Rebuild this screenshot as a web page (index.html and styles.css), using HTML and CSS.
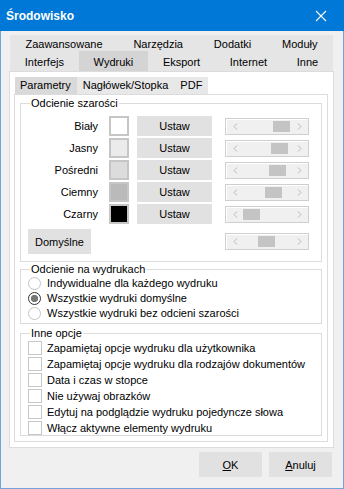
FILE: index.html
```html
<!DOCTYPE html>
<html lang="pl">
<head>
    <meta charset="UTF-8">
    <title>Środowisko</title>
    <link rel="stylesheet" href="styles.css">
</head>
<body>
<div class="window">
    <div class="titlebar">
        <span class="title">Środowisko</span>
        <span class="close">
            <svg width="12" height="12" viewBox="0 0 12 12"><path d="M1 1 L11 11 M11 1 L1 11" stroke="#fff" stroke-width="1.1" fill="none"/></svg>
        </span>
    </div>

    <div class="client">
        <div class="tabstrip">
            <div class="tabrow">
                <div class="tab">Zaawansowane</div>
                <div class="tab">Narzędzia</div>
                <div class="tab">Dodatki</div>
                <div class="tab">Moduły</div>
            </div>
            <div class="tabrow">
                <div class="tab">Interfejs</div>
                <div class="tab active">Wydruki</div>
                <div class="tab">Eksport</div>
                <div class="tab">Internet</div>
                <div class="tab">Inne</div>
            </div>
        </div>

        <div class="panel">
            <div class="subtabs">
                <div class="subtab active">Parametry</div>
                <div class="subtab">Nagłówek/Stopka</div>
                <div class="subtab">PDF</div>
            </div>

            <div class="subpanel">
                <fieldset class="group shades">
                    <legend>Odcienie szarości</legend>

                    <div class="shade-row">
                        <span class="shade-label">Biały</span>
                        <span class="swatch white"></span>
                        <button class="btn set">Ustaw</button>
                        <div class="slider">
                            <svg class="arr" width="5" height="7" viewBox="0 0 5 7"><path d="M4 0.5 L1 3.5 L4 6.5" stroke="#b9b9b9" fill="none"/></svg>
                            <span class="track"><span class="thumb" style="margin-left:33px"></span></span>
                            <svg class="arr" width="5" height="7" viewBox="0 0 5 7"><path d="M1 0.5 L4 3.5 L1 6.5" stroke="#b9b9b9" fill="none"/></svg>
                        </div>
                    </div>
                    <div class="shade-row">
                        <span class="shade-label">Jasny</span>
                        <span class="swatch light"></span>
                        <button class="btn set">Ustaw</button>
                        <div class="slider">
                            <svg class="arr" width="5" height="7" viewBox="0 0 5 7"><path d="M4 0.5 L1 3.5 L4 6.5" stroke="#b9b9b9" fill="none"/></svg>
                            <span class="track"><span class="thumb" style="margin-left:31px"></span></span>
                            <svg class="arr" width="5" height="7" viewBox="0 0 5 7"><path d="M1 0.5 L4 3.5 L1 6.5" stroke="#b9b9b9" fill="none"/></svg>
                        </div>
                    </div>
                    <div class="shade-row">
                        <span class="shade-label">Pośredni</span>
                        <span class="swatch medium"></span>
                        <button class="btn set">Ustaw</button>
                        <div class="slider">
                            <svg class="arr" width="5" height="7" viewBox="0 0 5 7"><path d="M4 0.5 L1 3.5 L4 6.5" stroke="#b9b9b9" fill="none"/></svg>
                            <span class="track"><span class="thumb" style="margin-left:29px"></span></span>
                            <svg class="arr" width="5" height="7" viewBox="0 0 5 7"><path d="M1 0.5 L4 3.5 L1 6.5" stroke="#b9b9b9" fill="none"/></svg>
                        </div>
                    </div>
                    <div class="shade-row">
                        <span class="shade-label">Ciemny</span>
                        <span class="swatch dark"></span>
                        <button class="btn set">Ustaw</button>
                        <div class="slider">
                            <svg class="arr" width="5" height="7" viewBox="0 0 5 7"><path d="M4 0.5 L1 3.5 L4 6.5" stroke="#b9b9b9" fill="none"/></svg>
                            <span class="track"><span class="thumb" style="margin-left:25px"></span></span>
                            <svg class="arr" width="5" height="7" viewBox="0 0 5 7"><path d="M1 0.5 L4 3.5 L1 6.5" stroke="#b9b9b9" fill="none"/></svg>
                        </div>
                    </div>
                    <div class="shade-row">
                        <span class="shade-label">Czarny</span>
                        <span class="swatch black"></span>
                        <button class="btn set">Ustaw</button>
                        <div class="slider">
                            <svg class="arr" width="5" height="7" viewBox="0 0 5 7"><path d="M4 0.5 L1 3.5 L4 6.5" stroke="#b9b9b9" fill="none"/></svg>
                            <span class="track"><span class="thumb" style="margin-left:3px"></span></span>
                            <svg class="arr" width="5" height="7" viewBox="0 0 5 7"><path d="M1 0.5 L4 3.5 L1 6.5" stroke="#b9b9b9" fill="none"/></svg>
                        </div>
                    </div>

                    <div class="default-row">
                        <button class="btn defaults">Domyślne</button>
                        <div class="slider">
                            <svg class="arr" width="5" height="7" viewBox="0 0 5 7"><path d="M4 0.5 L1 3.5 L4 6.5" stroke="#b9b9b9" fill="none"/></svg>
                            <span class="track"><span class="thumb" style="margin-left:18px"></span></span>
                            <svg class="arr" width="5" height="7" viewBox="0 0 5 7"><path d="M1 0.5 L4 3.5 L1 6.5" stroke="#b9b9b9" fill="none"/></svg>
                        </div>
                    </div>
                </fieldset>

                <fieldset class="group radios">
                    <legend>Odcienie na wydrukach</legend>
                    <label class="opt"><span class="radio"></span>Indywidualne dla każdego wydruku</label>
                    <label class="opt"><span class="radio checked"></span>Wszystkie wydruki domyślne</label>
                    <label class="opt"><span class="radio"></span>Wszystkie wydruki bez odcieni szarości</label>
                </fieldset>

                <fieldset class="group checks">
                    <legend>Inne opcje</legend>
                    <label class="opt chk"><span class="box"></span>Zapamiętaj opcje wydruku dla użytkownika</label>
                    <label class="opt chk"><span class="box"></span>Zapamiętaj opcje wydruku dla rodzajów dokumentów</label>
                    <label class="opt chk"><span class="box"></span>Data i czas w stopce</label>
                    <label class="opt chk"><span class="box"></span>Nie używaj obrazków</label>
                    <label class="opt chk"><span class="box"></span>Edytuj na podglądzie wydruku pojedyncze słowa</label>
                    <label class="opt chk"><span class="box"></span>Włącz aktywne elementy wydruku</label>
                </fieldset>
            </div>
        </div>

        <div class="footer">
            <button class="btn dlg"><u>O</u>K</button>
            <button class="btn dlg"><u>A</u>nuluj</button>
        </div>
    </div>
</div>
</body>
</html>
```

FILE: styles.css
```css
html, body {
    margin: 0;
    padding: 0;
    font-family: "Liberation Sans", Arial, sans-serif;
    font-size: 11px;
    color: #000;
}

.window {
    width: 344px;
    height: 489px;
    box-sizing: border-box;
    background: #f0f0f0;
    border: 1px solid #6fa3dc;
    border-top: none;
    display: flex;
    flex-direction: column;
}

/* title bar */
.titlebar {
    height: 31px;
    flex-shrink: 0;
    margin: 0 -1px;
    background: #0078d7;
    color: #fff;
    display: flex;
    align-items: center;
    justify-content: space-between;
    padding: 0 17px 0 6px;
}

.title {
    font-weight: bold;
    font-size: 12px;
}

.close {
    display: flex;
}

.client {
    flex-grow: 1;
    display: flex;
    flex-direction: column;
    padding: 4px 9px 0 8px;
}

/* outer tabs */
.tabstrip {
    margin: 0 1px;
    background: #e5e5e5;
}

.tabrow {
    display: flex;
    height: 18px;
}

.tab {
    flex: 1 1 auto;
    text-align: center;
    line-height: 18px;
    padding: 0 4px;
    white-space: nowrap;
}

.tab.active {
    background: #d4d4d4;
    margin-top: -2px;
    height: 20px;
    line-height: 22px;
    position: relative;
    z-index: 1;
}

.panel {
    background: #fff;
    border: 1px solid #dcdcdc;
    padding: 5px 5px 5px 4px;
    height: 377px;
    box-sizing: border-box;
    flex-shrink: 0;
}

/* inner tabs */
.subtabs {
    display: flex;
    height: 17px;
    padding-left: 1px;
}

.subtab {
    background: #e8e8e8;
    line-height: 17px;
    padding: 0 6px;
}

.subtab.active {
    background: #d9d9d9;
    padding: 0 6px 0 5px;
}

.subpanel {
    border: 1px solid #dcdcdc;
    height: 348px;
    box-sizing: border-box;
    padding: 1px 5px 0;
}

/* group boxes */
.group {
    border: 1px solid #dcdcdc;
    margin: 0;
    padding: 0 0 0 7px;
    min-width: 0;
}

.group legend {
    padding: 0 1px;
    margin-left: 2px;
    line-height: 14px;
}

.shades {
    height: 166px;
    box-sizing: border-box;
    padding-top: 6px;
}

.shade-row {
    display: flex;
    align-items: center;
    height: 20px;
    margin-bottom: 2px;
}

.shade-label {
    width: 70px;
    text-align: right;
    margin-right: 11px;
}

.swatch {
    width: 20px;
    height: 20px;
    box-sizing: border-box;
    border: 2px solid #c6c6c6;
    margin-right: 8px;
}

.swatch.white { background: #ffffff; }
.swatch.light { background: #ebebeb; }
.swatch.medium { background: #dcdcdc; }
.swatch.dark { background: #bababa; }
.swatch.black { background: #000000; }

.btn {
    font-family: inherit;
    font-size: 11px;
    color: #000;
    background: #e1e1e1;
    border: none;
    padding: 0;
    margin: 0;
}

.set {
    width: 75px;
    height: 20px;
    margin-right: 13px;
}

.slider {
    width: 84px;
    height: 17px;
    box-sizing: border-box;
    border: 1px solid #cfcfcf;
    box-shadow: inset 1px 1px 0 #fff;
    background: #f0f0f0;
    display: flex;
    align-items: center;
    padding: 0 6px 0 7px;
}

.track {
    flex-grow: 1;
    display: flex;
    padding: 0 2px;
}

.thumb {
    width: 17px;
    height: 11px;
    background: #c4c4c4;
}

.default-row {
    display: flex;
    align-items: center;
    margin-top: 5px;
}

.defaults {
    width: 63px;
    height: 25px;
    margin-right: 134px;
}

.radios {
    height: 62px;
    box-sizing: border-box;
    padding-top: 0;
}

.opt {
    display: flex;
    align-items: center;
    height: 15px;
    line-height: 15px;
    white-space: nowrap;
}

.radio {
    width: 13px;
    height: 13px;
    box-sizing: border-box;
    border: 1px solid #c3c3c3;
    border-radius: 50%;
    background: #fff;
    margin-right: 6px;
}

.radio.checked {
    border-color: #333;
    background: radial-gradient(circle, #777 0, #777 3.4px, #fff 3.9px);
}

.checks {
    margin-top: 2px;
    height: 110px;
    box-sizing: border-box;
    padding-top: 0;
}

.opt.chk {
    height: 16px;
    line-height: 16px;
}

.box {
    width: 14px;
    height: 14px;
    box-sizing: border-box;
    border: 1px solid #c8c8c8;
    background: #fff;
    margin-right: 5px;
}

/* dialog buttons */
.footer {
    display: flex;
    justify-content: flex-end;
    gap: 7px;
    padding: 4px 2px 0 0;
}

.dlg {
    width: 63px;
    height: 25px;
}
```
